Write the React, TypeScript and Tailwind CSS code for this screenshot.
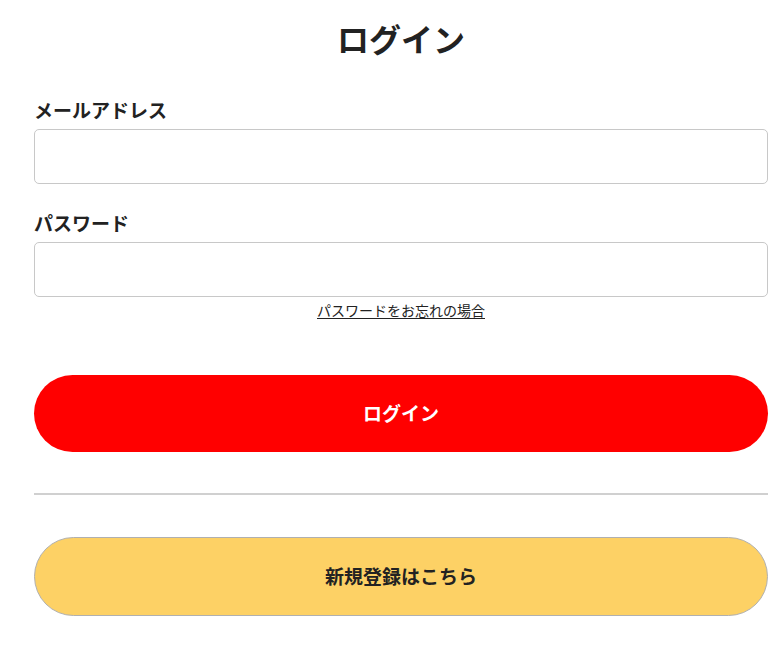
const font = "font-['Meiryo','Noto_Sans_CJK_JP',sans-serif]";

const App = () => {
  return (
    <div className={`min-h-[654px] bg-white text-[#222] ${font}`}>
      <div className="pl-[34px] pr-[15px] pt-[14px]">
        {/* Title */}
        <h1 className="text-center text-[32px] font-bold leading-[48px]">ログイン</h1>

        {/* Email */}
        <label className="mt-[34px] mb-[5px] block text-[19px] font-bold leading-[28px]">
          メールアドレス
        </label>
        <input
          type="email"
          className="block h-[55px] w-full rounded-[5px] border border-[#c8c8c8] px-3 outline-none"
        />

        {/* Password */}
        <label className="mt-[25px] mb-[5px] block text-[19px] font-bold leading-[28px]">
          パスワード
        </label>
        <input
          type="password"
          className="block h-[55px] w-full rounded-[5px] border border-[#c8c8c8] px-3 outline-none"
        />
        <div className="mt-[3px] text-center text-[14px] leading-[20px]">
          <a href="#" className="text-[#222] underline underline-offset-2">
            パスワードをお忘れの場合
          </a>
        </div>

        {/* Login */}
        <button className="mt-[55px] flex h-[77px] w-full items-center justify-center rounded-full bg-[#ff0000] text-[19px] font-bold text-white">
          ログイン
        </button>

        <hr className="mt-[41px] border-0 border-t-2 border-[#d0d0d0]" />

        {/* Register */}
        <button className="mt-[42px] flex h-[79px] w-full items-center justify-center rounded-full border border-[#b0b0b0] bg-[#fdd165] text-[19px] font-bold text-[#222]">
          新規登録はこちら
        </button>
      </div>
    </div>
  );
};

export default App;
